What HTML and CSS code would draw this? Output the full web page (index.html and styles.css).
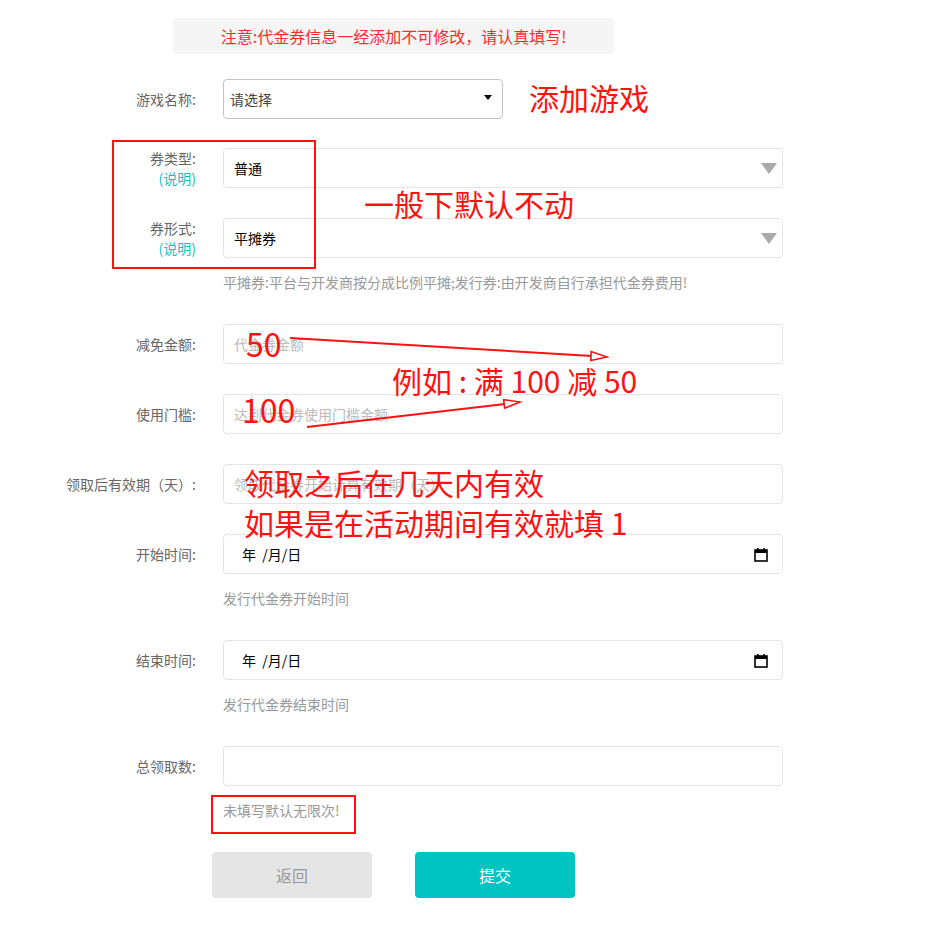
FILE: index.html
```html
<!DOCTYPE html>
<html lang="zh-CN">
<head>
<meta charset="utf-8">
<title>添加代金券</title>
<link rel="stylesheet" href="styles.css">
</head>
<body>
<div class="page">
  <div class="notice">注意:代金券信息一经添加不可修改，请认真填写!</div>

  <form class="form">
    <div class="item item-first">
      <label class="label">游戏名称:</label>
      <div class="control half dark">
        <span class="value muted">请选择</span>
        <span class="caret-small"></span>
      </div>
    </div>

    <div class="item">
      <label class="label two"><span>券类型:</span><span class="tip">(说明)</span></label>
      <div class="control">
        <span class="value black">普通</span>
        <span class="caret-big"></span>
      </div>
    </div>

    <div class="item item-hint">
      <label class="label two"><span>券形式:</span><span class="tip">(说明)</span></label>
      <div class="control">
        <span class="value black">平摊券</span>
        <span class="caret-big"></span>
      </div>
    </div>
    <div class="hint">平摊券:平台与开发商按分成比例平摊;发行券:由开发商自行承担代金券费用!</div>

    <div class="item">
      <label class="label">减免金额:</label>
      <div class="control"><span class="value ph">代金券金额</span></div>
    </div>

    <div class="item">
      <label class="label">使用门槛:</label>
      <div class="control"><span class="value ph">达到代金券使用门槛金额</span></div>
    </div>

    <div class="item">
      <label class="label">领取后有效期（天）:</label>
      <div class="control"><span class="value ph">领取代金券开始计算有效期（天）</span></div>
    </div>

    <div class="item item-hint">
      <label class="label">开始时间:</label>
      <div class="control">
        <span class="value date">年 &nbsp;/月/日</span>
        <svg class="cal" width="14" height="15" viewBox="0 0 14 15"><rect x="1" y="3" width="12" height="11" fill="none" stroke="#000" stroke-width="1.6"/><rect x="1" y="3" width="12" height="3" fill="#000"/><rect x="3" y="1" width="1.6" height="3" fill="#000"/><rect x="9.4" y="1" width="1.6" height="3" fill="#000"/></svg>
      </div>
    </div>
    <div class="hint">发行代金券开始时间</div>

    <div class="item item-hint">
      <label class="label">结束时间:</label>
      <div class="control">
        <span class="value date">年 &nbsp;/月/日</span>
        <svg class="cal" width="14" height="15" viewBox="0 0 14 15"><rect x="1" y="3" width="12" height="11" fill="none" stroke="#000" stroke-width="1.6"/><rect x="1" y="3" width="12" height="3" fill="#000"/><rect x="3" y="1" width="1.6" height="3" fill="#000"/><rect x="9.4" y="1" width="1.6" height="3" fill="#000"/></svg>
      </div>
    </div>
    <div class="hint">发行代金券结束时间</div>

    <div class="item item-hint">
      <label class="label">总领取数:</label>
      <div class="control"></div>
    </div>
    <div class="hint">未填写默认无限次!</div>

    <div class="buttons">
      <button type="button" class="btn btn-back">返回</button>
      <button type="button" class="btn btn-submit">提交</button>
    </div>
  </form>

  <!-- red annotations drawn over the form -->
  <svg class="marks" width="930" height="928" viewBox="0 0 930 928">
    <rect x="113" y="141" width="202" height="127" fill="none" stroke="#f11" stroke-width="2"/>
    <rect x="212" y="796" width="143" height="37" fill="none" stroke="#f11" stroke-width="2"/>
    <line x1="290" y1="338" x2="592" y2="356" stroke="#f11" stroke-width="2"/>
    <polygon points="607,357 590.8,360.5 591.2,351.5" fill="#fff" stroke="#f11" stroke-width="1.6"/>
    <line x1="307" y1="427" x2="505" y2="404" stroke="#f11" stroke-width="2"/>
    <polygon points="520,402 504.6,408.2 503.6,399.6" fill="#fff" stroke="#f11" stroke-width="1.6"/>
  </svg>
  <div class="note n-add">添加游戏</div>
  <div class="note n-default">一般下默认不动</div>
  <div class="note n-50">50</div>
  <div class="note n-100">100</div>
  <div class="note n-eg">例如 : 满 100 减 50</div>
  <div class="note n-days">领取之后在几天内有效</div>
  <div class="note n-fill">如果是在活动期间有效就填 1</div>
</div>
</body>
</html>
```

FILE: styles.css
```css
* { box-sizing: border-box; }

html, body {
  margin: 0;
  padding: 0;
  background: #fff;
  font-family: "Noto Sans CJK SC", "Noto Sans", "Liberation Sans", sans-serif;
}

.page {
  position: relative;
  width: 930px;
  min-height: 928px;
  padding-top: 18px;
}

.notice {
  margin-left: 173px;
  width: 441px;
  height: 36px;
  line-height: 36px;
  background: #f5f5f5;
  border-radius: 4px;
  color: #ff2b2b;
  font-size: 16px;
  text-align: center;
}

.form {
  margin: 25px 0 0 0;
  display: flex;
  flex-direction: column;
}

.item {
  display: grid;
  grid-template-columns: 196px 560px;
  column-gap: 27px;
  align-items: center;
  margin-bottom: 30px;
}

.item-first { margin-bottom: 29px; }
.item-hint { margin-bottom: 0; }

.label {
  font-size: 14px;
  color: #666;
  text-align: right;
  line-height: 20px;
}

.label.two {
  display: flex;
  flex-direction: column;
  align-items: flex-end;
}

.tip { color: #1cbcbc; }

.control {
  position: relative;
  height: 40px;
  border: 1px solid #e4e4e4;
  border-radius: 4px;
  display: flex;
  align-items: center;
  padding: 0 10px;
  background: #fff;
}

.control.half { width: 280px; padding-left: 6px; }
.control.dark { border-color: #c4c4c4; }

.value { font-size: 14px; }
.value.muted { color: #444; }
.value.black { color: #000; }
.value.ph { color: #bbb; }
.value.date { color: #000; font-size: 14px; padding-left: 8px; }

.caret-small {
  position: absolute;
  right: 10px;
  top: 15px;
  width: 0;
  height: 0;
  border-left: 4px solid transparent;
  border-right: 4px solid transparent;
  border-top: 5px solid #000;
}

.caret-big {
  position: absolute;
  right: 5px;
  top: 14px;
  width: 0;
  height: 0;
  border-left: 8px solid transparent;
  border-right: 8px solid transparent;
  border-top: 11px solid #aaa;
}

.cal {
  margin-left: auto;
  margin-right: 4px;
}

.hint {
  margin: 13px 0 31px 223px;
  line-height: 22px;
  font-size: 14px;
  color: #999;
}

.buttons {
  display: flex;
  gap: 43px;
  margin-left: 212px;
  margin-top: 0;
}

.btn {
  width: 160px;
  height: 46px;
  border: 0;
  border-radius: 4px;
  font-family: inherit;
  font-size: 16px;
}

.btn-back { background: #e5e5e5; color: #999; }
.btn-submit { background: #00c4c2; color: #fff; }

.marks {
  position: absolute;
  left: 0;
  top: 0;
  pointer-events: none;
}

.note {
  position: absolute;
  color: #f11;
  font-size: 30px;
  line-height: 1;
  white-space: nowrap;
}

.n-add { left: 529px; top: 82px; }
.n-default { left: 364px; top: 188px; }
.n-50 { left: 246px; top: 327px; font-size: 32px; }
.n-100 { left: 242px; top: 393px; font-size: 32px; }
.n-eg { left: 392px; top: 365px; }
.n-days { left: 244px; top: 467px; }
.n-fill { left: 244px; top: 507px; }
```
